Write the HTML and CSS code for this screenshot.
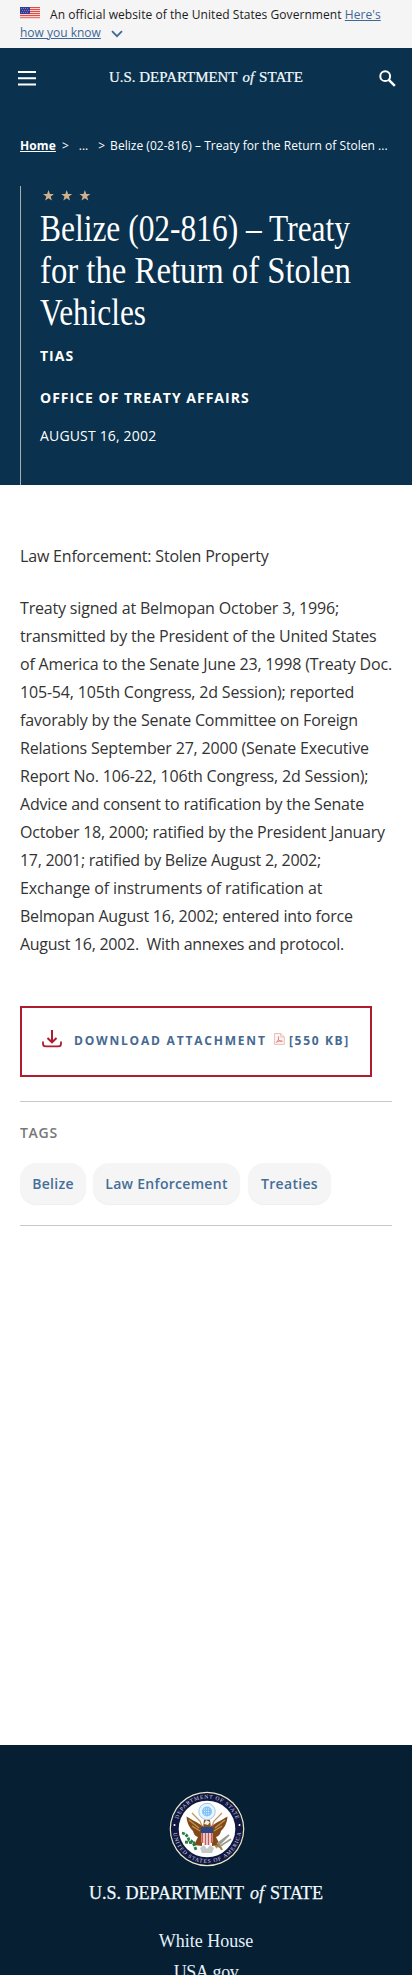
FILE: index.html
```html
<!DOCTYPE html>
<html lang="en">
<head>
<meta charset="utf-8">
<meta name="viewport" content="width=device-width, initial-scale=1">
<title>Belize (02-816) – Treaty for the Return of Stolen Vehicles</title>
<link rel="stylesheet" href="styles.css">
</head>
<body>
<div class="banner">
  <svg class="flag" viewBox="0 0 20 12"><rect width="20" height="12" fill="#fff"/><path d="M0 .6h20M0 2.6h20M0 4.6h20M0 6.6h20M0 8.6h20M0 10.8h20" stroke="#df4b45" stroke-width="1.1"/><rect width="10" height="7" fill="#343d91"/><path d="M1 1.5h8M2 3.5h7M1 5.5h8" stroke="#8d93d0" stroke-width=".8" stroke-dasharray="1 1"/></svg><span class="official">An official website of the United States Government <a href="#">Here's</a></span><br><a href="#">how you know</a><svg class="chevron" viewBox="0 0 12 8"><path d="M1 1.2 6 6.2l5-5" fill="none" stroke="#3e6796" stroke-width="1.7"/></svg>
</div>
<header class="hero">
  <div class="bar">
    <svg class="menu" viewBox="0 0 18 15"><path d="M0 1h18M0 7.2h18M0 13.5h18" stroke="#fff" stroke-width="2"/></svg>
    <svg class="wordmark" viewBox="0 0 234 24"><text x="0" y="17" textLength="155" lengthAdjust="spacingAndGlyphs">U.S. DEPARTMENT</text><text class="of" x="161" y="17" textLength="14" lengthAdjust="spacingAndGlyphs">of</text><text x="181" y="17" textLength="53" lengthAdjust="spacingAndGlyphs">STATE</text></svg>
    <svg class="search" viewBox="0 0 17 17"><circle cx="6.2" cy="6.2" r="4.9" fill="none" stroke="#fff" stroke-width="2"/><path d="m9.8 9.8 6 6" stroke="#fff" stroke-width="2.5"/></svg>
  </div>
  <nav class="crumbs"><a href="#">Home</a><span class="sep">&gt;</span><span class="dots">...</span><span class="sep2">&gt;</span><span class="current">Belize (02-816) – Treaty for the Return of Stolen ...</span></nav>
  <div class="heading">
    <svg class="stars" viewBox="0 0 48 12"><g fill="#d1b08a"><path id="star" d="m5.5 0 1.4 4h4.1L7.7 6.5l1.2 4.1-3.4-2.4-3.4 2.4 1.2-4.1L0 4h4.1z"/><use href="#star" x="18.2"/><use href="#star" x="36.4"/></g></svg>
    <h1><svg class="title" viewBox="0 0 340 126"><text x="0" y="33" textLength="310" lengthAdjust="spacingAndGlyphs">Belize (02-816) – Treaty</text><text x="0" y="75" textLength="311" lengthAdjust="spacingAndGlyphs">for the Return of Stolen</text><text x="0" y="117" textLength="106" lengthAdjust="spacingAndGlyphs">Vehicles</text></svg></h1>
    <p class="kind">TIAS</p>
    <p class="office">OFFICE OF TREATY AFFAIRS</p>
    <p class="date">AUGUST 16, 2002</p>
  </div>
</header>
<main class="content">
  <p class="topic">Law Enforcement: Stolen Property</p>
  <p class="history">Treaty signed at Belmopan October 3, 1996;<br>transmitted by the President of the United States<br>of America to the Senate June 23, 1998 (Treaty Doc.<br>105-54, 105th Congress, 2d Session); reported<br>favorably by the Senate Committee on Foreign<br>Relations September 27, 2000 (Senate Executive<br>Report No. 106-22, 106th Congress, 2d Session);<br><span class="snug">Advice and consent to ratification by the Senate<br>October 18, 2000; ratified by the President January<br></span><span class="tight">17, 2001; ratified by Belize August 2, 2002;</span><br><span class="loose">Exchange of instruments of ratification at</span><br><span class="snug">Belmopan August 16, 2002; entered into force</span><br><span class="tight">August 16, 2002.&nbsp; With annexes and protocol.</span></p>
  <a class="download" href="#">
    <svg class="arrow" viewBox="0 0 20 18"><path d="M10 0v12M5.5 8 10 12.3 14.500 8" fill="none" stroke="#ae1c2e" stroke-width="2"/><path d="M1 11.500v2.200q0 2.600 2.600 2.600h12.800q2.600 0 2.600-2.600v-2.200" fill="none" stroke="#ae1c2e" stroke-width="1.800"/></svg>
    <span class="label">DOWNLOAD ATTACHMENT</span>
    <svg class="pdf" viewBox="0 0 11 12"><path d="M.6.5h6.200l3.500 3.600v7.300H.6zM6.800.5v3.600h3.500" fill="#fff6f5" stroke="#e9a09b" stroke-width=".9"/><path d="M2.200 9.500C4 8.300 5.300 5.700 4.300 3.300M4.200 6.200c1 1.700 2.300 2.300 4.300 2M2.400 9.300c2-1.500 3.700-1.500 6-1.100" fill="none" stroke="#d9625c" stroke-width="1"/></svg>
    <span class="size">[550 KB]</span>
  </a>
  <section class="tags">
    <h2>TAGS</h2>
    <div class="pills"><a class="p1" href="#">Belize</a><a class="p2" href="#">Law Enforcement</a><a class="p3" href="#">Treaties</a></div>
  </section>
</main>
<footer class="footer">
  <svg class="seal" viewBox="-38 -38 76 76">
    <defs><path id="top" d="M-30.500 0a30.500 30.500 0 0 1 61 0"/><path id="bottom" d="M-34 0a34 34 0 0 0 68 0"/></defs>
    <circle r="37.300" fill="#e9e8c8"/><circle r="36.100" fill="#11183f"/><circle r="28.300" fill="#fff"/>
    <g class="ring"><text><textPath href="#top" startOffset="10" textLength="76">DEPARTMENT OF STATE</textPath></text><text><textPath href="#bottom" startOffset="4" textLength="99">UNITED STATES OF AMERICA</textPath></text></g>
    <circle cx="-32.500" cy="-4" r="1" fill="#fff"/><circle cx="32.500" cy="-4" r="1" fill="#fff"/>
    <circle cy="-17.500" r="8.200" fill="#e8f5ff" stroke="#9bc9ec"/><circle cy="-17.500" r="5" fill="#86c3f5"/><path d="M-3-20H3M-3-17.500H3M-3-15H3" stroke="#dceeff" stroke-width="1" stroke-dasharray="1 1"/>
    <path d="M-4-3C-9-6-13-8-20.500-12.500-20-5-17-1-14 2q1 5 5 6l-4 8 8 1v-12zM4-3C9-6 13-8 20.500-12.500 20-5 17-1 14 2q-1 5-5 6l4 8-8 1v-12z" fill="#824817"/>
    <path d="M-15-16-7-8-5-3M15-16 7-8 5-3M-18-9l10 8M18-9 8-1M-15-3l8 5M15-3 7 2" fill="none" stroke="#c39357" stroke-width="1.200"/>
    <path d="M-3-9 3-9 4-1H-4z" fill="#865020"/><path d="M-1-9 3-7 1-4-3-5z" fill="#f5f0df"/>
    <path d="M-5.500 1h11v12q-2.500 4-5.500 4t-5.500-4z" fill="#fff"/><path d="M-4.500 4v10M-1.500 4v12M1.500 4v12M4.500 4v10" stroke="#c75a58" stroke-width="1.700"/><path d="M-6-2H6v6H-6z" fill="#2b4788"/>
    <path d="M-25 4q5 1 7 7 4 0 7 10M-22 13l10 1" fill="none" stroke="#267c45" stroke-width="2.800" stroke-dasharray="3 1"/>
    <path d="m9 19 12-12M10 15l12-9M12 18l12-8" stroke="#999b91" stroke-width="1.600"/><path d="M8 17q5-1 7 4" fill="none" stroke="#a77b3b" stroke-width="2"/>
    <path d="M-7 19-3 16 0 20 3 16 7 19 5 24-5 24z" fill="#c7c8c8"/>
  </svg>
  <svg class="wordmark" viewBox="0 0 234 24"><text x="0" y="17" textLength="155" lengthAdjust="spacingAndGlyphs">U.S. DEPARTMENT</text><text class="of" x="161" y="17" textLength="14" lengthAdjust="spacingAndGlyphs">of</text><text x="181" y="17" textLength="53" lengthAdjust="spacingAndGlyphs">STATE</text></svg>
  <a class="l1" href="#">White House</a>
  <a class="l2" href="#">USA.gov</a>
</footer>
</body>
</html>
```
FILE: styles.css
```css
* { box-sizing: border-box; }
html, body { margin: 0; height: 1975px; overflow: hidden; }
body { font-family: "Open Sans", sans-serif; color: #323a45; background: #fff; display: flex; flex-direction: column; }
svg { display: block; flex: none; }
p, h1, h2 { margin: 0; }
.banner { height: 48px; background: #f5f5f5; padding: 6px 20px 0; font-size: 12px; line-height: 18px; color: #1b1b1b; white-space: nowrap; }
.banner a { color: #3e6796; }
.official { letter-spacing: .06px; }
.flag { display: inline-block; width: 20px; height: 12px; margin-right: 10px; vertical-align: 0; }
.chevron { display: inline-block; width: 12px; height: 8px; margin-left: 10px; vertical-align: -1px; }
.hero { height: 437px; background: #0a314d; color: #fff; display: flex; flex-direction: column; }
.bar { height: 60px; display: flex; align-items: center; justify-content: space-between; padding: 0 16px 0 18px; }
.bar .wordmark { width: 194px; height: 20px; margin-right: 3px; }
.menu { width: 18px; height: 15px; }
.search { width: 17px; height: 17px; }
.wordmark text { font-family: "Liberation Serif", serif; font-size: 18.500px; fill: #f2fbff; stroke: #f2fbff; stroke-width: .25px; }
.wordmark .of { font-style: italic; }
.crumbs { margin: 28px 20px 0; height: 20px; line-height: 20px; font-size: 12px; display: flex; white-space: nowrap; }
.crumbs a { color: #fff; font-weight: 700; letter-spacing: .1px; }
.sep { margin-left: 6px; }
.dots { margin-left: 10px; }
.sep2 { margin-left: 10px; }
.current { margin-left: 5px; letter-spacing: .03px; }
.heading { margin: 30px 0 0 20px; height: 299px; border-left: 1px solid #a9adac; padding-left: 19px; }
.stars { width: 48px; height: 12px; margin: 4px 0 0 3px; }
h1 { margin-top: 6px; }
.title { width: 340px; height: 126px; }
.title text { font: 400 37px "Liberation Serif", serif; fill: #fff; }
.kind, .office { font-size: 14px; font-weight: 700; line-height: 20px; letter-spacing: 1px; }
.kind { margin-top: 12px; }
.office { margin-top: 22px; }
.date { margin-top: 18px; font-size: 14px; line-height: 20px; letter-spacing: .17px; }
.content { padding: 57px 20px 0; height: 1260px; font-size: 16px; line-height: 28px; }
.topic, .history { letter-spacing: -.18px; white-space: nowrap; color: #333; }
.snug { letter-spacing: -.22px; }
.tight { letter-spacing: -.28px; }
.loose { letter-spacing: -.12px; }
.history { margin-top: 24px; }
.download { margin-top: 48px; width: 352px; height: 71px; border: 2px solid #ae1c2e; display: flex; align-items: flex-start; padding: 22px 0 0 20px; color: #456990; text-decoration: none; font-size: 12px; font-weight: 700; line-height: 22px; white-space: nowrap; }
.arrow { width: 20px; height: 18px; }
.label { margin-left: 12px; width: 191px; letter-spacing: 1.800px; }
.pdf { width: 11px; height: 12px; margin: 3px 0 0 9px; opacity: .8; }
.size { margin-left: 4px; letter-spacing: 1.650px; }
.tags { margin-top: 24px; border-top: 1px solid #c5c9cc; border-bottom: 1px solid #c5c9cc; height: 125px; padding-top: 21px; }
h2 { font-size: 14px; line-height: 20px; font-weight: 600; letter-spacing: .7px; color: #777; }
.pills { margin-top: 20px; display: flex; gap: 7px; }
.pills a { height: 41px; border-radius: 16px; background: #f5f5f5; color: #456e99; text-decoration: none; font-size: 14px; font-weight: 600; line-height: 41px; text-align: center; white-space: nowrap; letter-spacing: .3px; box-shadow: 0 1px 1px #eee; }
.p1 { width: 66px; }
.p2 { width: 147px; }
.p3 { width: 83px; margin-left: 1px; }
.footer { height: 230px; background: #071f33; display: flex; flex-direction: column; align-items: center; padding-top: 46px; overflow: hidden; }
.seal { width: 76px; height: 76px; margin-left: 2px; }
.ring text { font: 5.500px "Liberation Serif", serif; fill: #dadce9; }
.footer .wordmark { width: 234px; height: 24px; margin-top: 15px; }
.footer a { color: #e3f1fa; text-decoration: none; font: 18px/31px "Liberation Serif", serif; }
.footer .l1 { margin-top: 20px; }
.footer .l2 { letter-spacing: -.4px; }
```
